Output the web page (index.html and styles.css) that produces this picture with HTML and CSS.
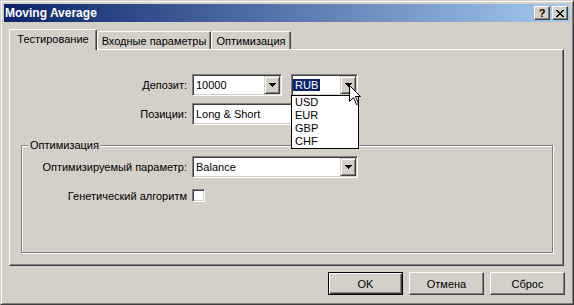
FILE: index.html
```html
<!DOCTYPE html>
<html><head>
  <meta charset="utf-8">
  <title>Moving Average</title>
  <link rel="stylesheet" href="styles.css">
</head>
<body>

<div class="window">
  <div class="caption">
    <span class="caption-title">Moving Average</span>
    <span class="caption-btn help">?</span>
    <span class="caption-btn close">
      <svg width="8" height="7" viewBox="0 0 8 7"><path d="M0 0h2v1H0zM6 0h2v1H6zM1 1h2v1H1zM5 1h2v1H5zM2 2h4v1H2zM3 3h2v1H3zM2 4h4v1H2zM1 5h2v1H1zM5 5h2v1H5zM0 6h2v1H0zM6 6h2v1H6z"/></svg>
    </span>
  </div>

  <div class="client">
    <div class="tabs">
      <div class="tab tab-active tab-w1">Тестирование</div>
      <div class="tab tab-w2">Входные параметры</div>
      <div class="tab tab-w3">Оптимизация</div>
    </div>

    <div class="panel">
      <div class="fields">
        <span class="field-label">Депозит:</span>
        <div class="field-row">
          <div class="combo combo-deposit">
            <span class="combo-text">10000</span>
            <span class="combo-btn"><svg width="7" height="4" viewBox="0 0 7 4"><path d="M0 0h7v1H0zM1 1h5v1H1zM2 2h3v1H2zM3 3h1v1H3z"/></svg></span>
          </div>
          <div class="combo combo-currency">
            <span class="combo-text"><span class="selected">RUB</span></span>
            <span class="combo-btn"><svg width="7" height="4" viewBox="0 0 7 4"><path d="M0 0h7v1H0zM1 1h5v1H1zM2 2h3v1H2zM3 3h1v1H3z"/></svg></span>
            <ul class="combo-list">
              <li>USD</li>
              <li>EUR</li>
              <li>GBP</li>
              <li>CHF</li>
            </ul>
          </div>
        </div>

        <span class="field-label">Позиции:</span>
        <div class="combo combo-wide">
          <span class="combo-text">Long &amp; Short</span>
          <span class="combo-btn"><svg width="7" height="4" viewBox="0 0 7 4"><path d="M0 0h7v1H0zM1 1h5v1H1zM2 2h3v1H2zM3 3h1v1H3z"/></svg></span>
        </div>
      </div>

      <div class="group">
        <span class="group-title">Оптимизация</span>
        <div class="fields group-fields">
          <span class="field-label">Оптимизируемый параметр:</span>
          <div class="combo combo-wide">
            <span class="combo-text">Balance</span>
            <span class="combo-btn"><svg width="7" height="4" viewBox="0 0 7 4"><path d="M0 0h7v1H0zM1 1h5v1H1zM2 2h3v1H2zM3 3h1v1H3z"/></svg></span>
          </div>

          <span class="field-label">Генетический алгоритм</span>
          <span class="checkbox"></span>
        </div>
      </div>
    </div>

    <div class="actions">
      <button class="btn btn-default">OK</button>
      <button class="btn">Отмена</button>
      <button class="btn">Сброс</button>
    </div>
  </div>

  <svg class="cursor" width="13" height="21" viewBox="0 0 13 21">
    <path d="M0.5 0.5V16.5L4.5 12.5L7.5 19.5L9.5 18.5L6.5 11.5H11.5Z" fill="#fff" stroke="#000"/>
  </svg>
</div>

</body>
</html>
```

FILE: styles.css
```css
html,body {
  margin:0; padding:0; background:#D4D0C8;
}
body {
  font: 11px "Liberation Sans", Arial, sans-serif;
  color:#000;
  overflow:hidden;
}

.window {
  position:relative;
  width:574px; height:305px;
  box-sizing:border-box;
  border:1px solid;
  border-color:#D4D0C8 #404040 #404040 #D4D0C8;
  box-shadow: inset 1px 1px #fff, inset -1px -1px #808080;
  padding:3px;
  display:flex; flex-direction:column;
  background:#D4D0C8;
}

/* title bar */
.caption {
  height:18px;
  display:flex; align-items:center;
  padding:0 2px 0 1px;
  background:linear-gradient(to right, #0A246A, #A6CAF0);
  color:#fff;
}
.caption-title { flex:1; font-weight:bold; font-size:12px; }
.caption-btn {
  width:16px; height:14px;
  box-sizing:border-box;
  display:flex; align-items:center; justify-content:center;
  background:#D4D0C8; color:#000;
  border:1px solid;
  border-color:#fff #404040 #404040 #fff;
  box-shadow: inset -1px -1px #808080;
}
.help { margin-right:2px; font-weight:bold; font-size:11px; line-height:12px; }
.close svg { display:block; }

/* client area */
.client {
  flex:1;
  padding:7px 6px 0 5px;
  display:flex; flex-direction:column;
}

.tabs {
  display:flex; align-items:flex-end;
  height:20px;
  position:relative; z-index:2;
}
.tab {
  flex:none;
  height:18px;
  box-sizing:border-box;
  padding-top:3px;
  line-height:13px;
  text-align:center;
  white-space:nowrap;
  background:#D4D0C8;
  border:1px solid #fff;
  border-right-color:#404040;
  border-bottom:0;
  border-radius:2px 2px 0 0;
  box-shadow: inset -1px 0 #808080;
}
.tab-active { height:21px; margin-bottom:-1px; }
.tab-w1 { width:88px; }
.tab-w2 { width:114px; }
.tab-w3 { width:80px; }

.panel {
  width:555px; height:217px;
  box-sizing:border-box;
  border:1px solid;
  border-color:#fff #404040 #404040 #fff;
  box-shadow: inset -1px -1px #808080;
  position:relative; z-index:1;
}

.fields {
  display:grid;
  grid-template-columns:177px auto;
  column-gap:5px;
  row-gap:7px;
  align-items:center;
  justify-items:start;
  margin-top:24px;
}
.field-label { justify-self:end; white-space:nowrap; }
.field-row { display:flex; gap:9px; }

/* combo boxes */
.combo {
  position:relative;
  height:22px;
  box-sizing:border-box;
  display:flex; align-items:center;
  border:1px solid;
  border-color:#808080 #fff #fff #808080;
  box-shadow: inset 1px 1px #404040, inset -1px -1px #D4D0C8;
  padding:1px;
  background:#fff;
}
.combo-text { flex:1; padding-left:2px; white-space:nowrap; overflow:hidden; }
.combo-btn {
  width:16px; height:18px;
  box-sizing:border-box;
  display:flex; align-items:center; justify-content:center;
  background:#D4D0C8;
  border:1px solid;
  border-color:#D4D0C8 #404040 #404040 #D4D0C8;
  box-shadow: inset 1px 1px #fff, inset -1px -1px #808080;
}
.combo-btn svg { display:block; }
.combo-deposit { width:90px; }
.combo-currency { width:67px; }
.combo-currency .combo-text { padding-left:0; }
.combo-wide { width:166px; }

.selected {
  display:inline-block;
  padding:0 2px;
  line-height:12px;
  background:#0A246A; color:#fff;
}

.combo-list {
  position:absolute; top:100%; left:-1px;
  width:68px;
  box-sizing:border-box;
  margin:0; padding:0;
  list-style:none;
  border:1px solid #000;
  background:#fff;
  z-index:5;
}
.combo-list li { height:13px; line-height:13px; padding-left:3px; }

/* group box */
.group {
  position:relative;
  width:532px; height:108px;
  box-sizing:border-box;
  margin:20px 0 0 11px;
  border:1px solid #808080;
  box-shadow: 1px 1px 0 #fff, inset 1px 1px 0 #fff;
}
.group-title {
  position:absolute; top:-7px; left:6px;
  padding:0 2px;
  line-height:13px;
  background:#D4D0C8;
}
.group-fields {
  grid-template-columns:165px auto;
  row-gap:11px;
  margin-top:10px;
}

.checkbox {
  width:13px; height:13px;
  box-sizing:border-box;
  border:1px solid;
  border-color:#808080 #fff #fff #808080;
  box-shadow: inset 1px 1px #404040, inset -1px -1px #D4D0C8;
  background:#fff;
}

/* dialog buttons */
.actions {
  display:flex; justify-content:flex-end; gap:6px;
  margin:6px -1px 0 0;
}
.btn {
  width:75px; height:23px;
  box-sizing:border-box;
  padding:0;
  font:inherit; color:#000;
  background:#D4D0C8;
  border:1px solid;
  border-color:#fff #404040 #404040 #fff;
  box-shadow: inset -1px -1px #808080;
}
.btn-default {
  border-color:#000;
  box-shadow: inset 1px 1px #fff, inset -1px -1px #404040, inset -2px -2px #808080;
}

.cursor { position:absolute; left:348px; top:84px; z-index:10; }
```
